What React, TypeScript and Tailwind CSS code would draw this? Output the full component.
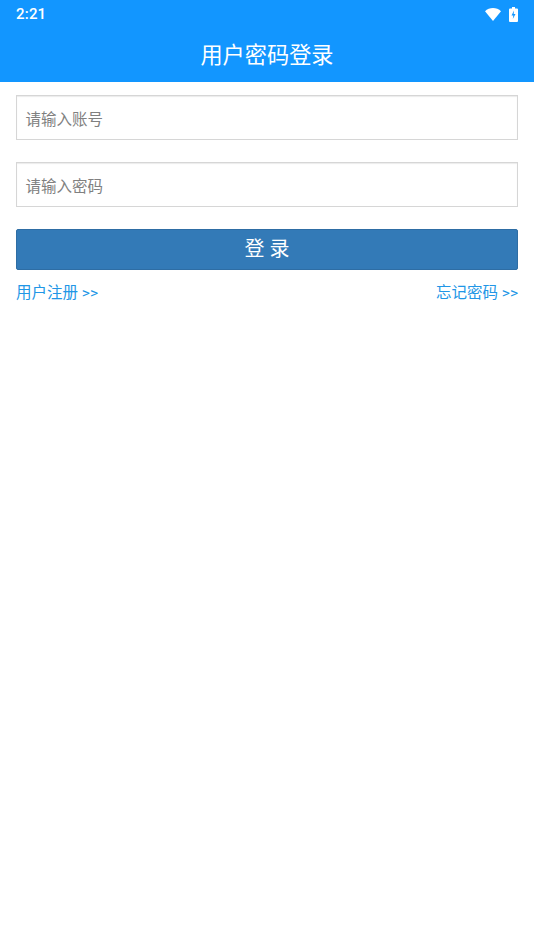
const cjk = { fontFamily: '"Roboto", "Noto Sans CJK SC", sans-serif' };

function LoginField({ placeholder }: { placeholder: string }) {
  return (
    <div className="h-[45px] border border-[#d6d6d6] bg-white pl-[8.5px] flex items-center shadow-[inset_0_1px_1px_rgba(0,0,0,0.08)]">
      <span className="text-[15.5px] leading-[22px] text-[#808080] mt-[5px]">{placeholder}</span>
    </div>
  );
}

export default function App() {
  return (
    <div className="w-[534px] h-[950px] bg-white overflow-hidden" style={cjk}>
      <div className="bg-[#1296ff] h-[82px] text-white">
        <div className="h-[28px] pl-[16px] pr-[16px] flex items-center justify-between">
          <span className="text-[15px] font-medium leading-none tracking-[0.2px]">2:21</span>
          <div className="flex items-center gap-[8px]">
            <svg width="16" height="13" viewBox="0 0 16 13">
              <path d="M0 3.200C2.200 1.200 5 0 8 0s5.800 1.200 8 3.200L8 13z" fill="#fff" />
            </svg>
            <svg width="9" height="15" viewBox="0 0 9 15">
              <path d="M3 0h3v1.500h2a1 1 0 0 1 1 1V14a1 1 0 0 1-1 1H1a1 1 0 0 1-1-1V2.500a1 1 0 0 1 1-1h2z" fill="#fff" />
              <path d="M5 3.500 2.500 8.500H4.300L3.800 12 6.500 7H4.700z" fill="#1296ff" />
            </svg>
          </div>
        </div>
        <div className="h-[54px] flex items-center justify-center">
          <h1 className="text-[22.2px] leading-none font-normal">用户密码登录</h1>
        </div>
      </div>

      <div className="px-[16px] pt-[13px] flex flex-col">
        <div className="flex flex-col gap-[22px]">
          <LoginField placeholder="请输入账号" />
          <LoginField placeholder="请输入密码" />
        </div>
        <button className="mt-[22px] h-[41px] pb-[2px] bg-[#337ab7] border border-[#2e6da4] rounded-[2px] text-white text-[20px] flex items-center justify-center">
          登 录
        </button>
        <div className="mt-[12px] flex items-center justify-between text-[15.5px] leading-[22px] text-[#2196e6]">
          <span>用户注册 &gt;&gt;</span>
          <span>忘记密码 &gt;&gt;</span>
        </div>
      </div>
    </div>
  );
}
